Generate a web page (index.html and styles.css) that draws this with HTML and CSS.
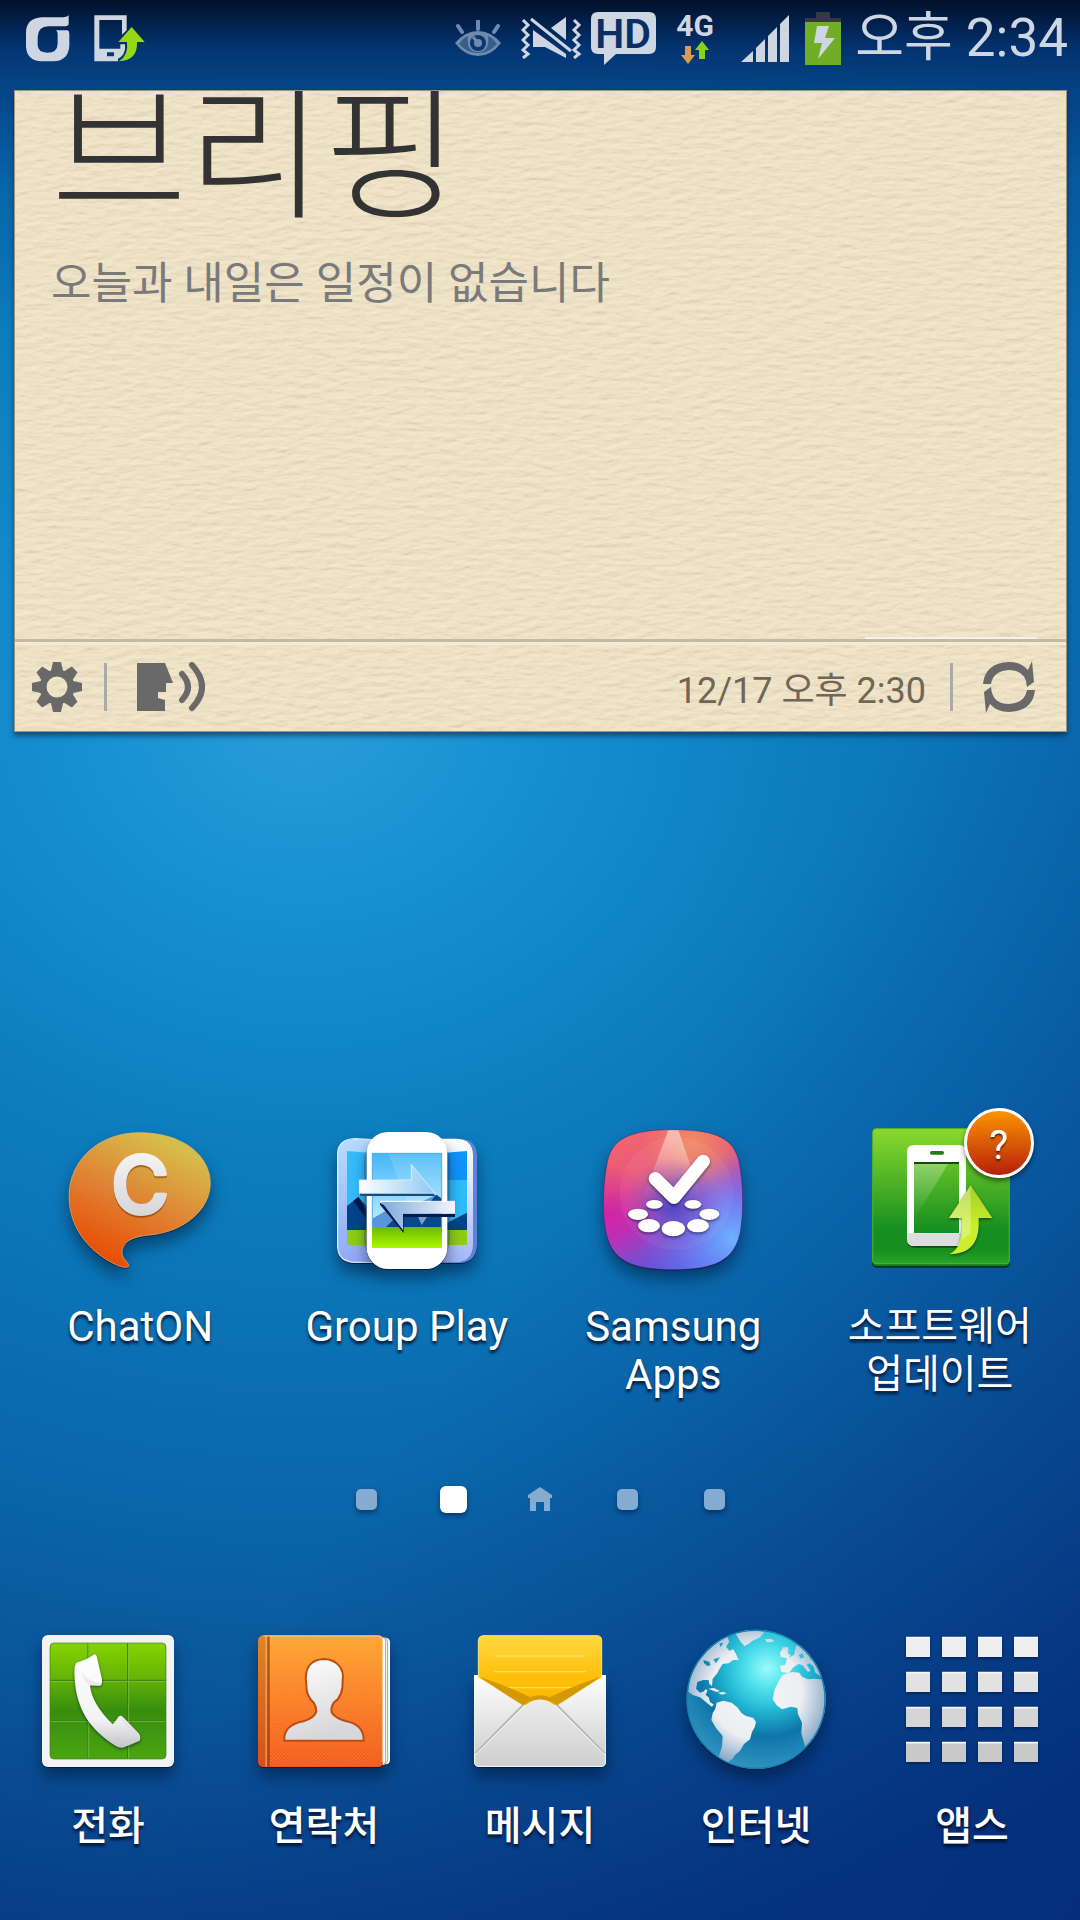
FILE: index.html
```html
<!DOCTYPE html>
<html lang="ko">
<head>
<meta charset="utf-8">
<meta name="viewport" content="width=device-width, initial-scale=1">
<title>홈 화면</title>
<link rel="stylesheet" href="styles.css">
</head>
<body>
<header class="status">
  <div class="status-left">
    <svg class="ic-carrier" viewBox="78 44 132 141" aria-hidden="true"><path fill="#ced6e2" fill-rule="evenodd" d="M78 95Q80 53 125 51H180Q203 51 206 44V72Q204 78 192 78H145Q114 79 113 110V135Q114 157 142 157Q172 157 173 130V103Q173 92 167 90H202Q208 91 208 100V135Q206 182 160 183H125Q80 182 78 138Z"/></svg>
    <svg class="ic-update" viewBox="282 42 153 141" aria-hidden="true"><path fill="#ced6e2" fill-rule="evenodd" d="M283 43H380V88L366 101V57H298V143H361V130H375V145Q370 168 354 173V181H283ZM321 154V166H342V154Z"/><path fill="#96d813" d="M395 78L434 123H411Q414 178 357 181Q386 163 381 123H355Z"/></svg>
  </div>
  <div class="status-right">
    <svg class="ic-eye" viewBox="0 0 46 36" aria-hidden="true"><path d="M3 6l4 6M23 1v8M43 6l-4 6" stroke="#6f8aaf" stroke-width="4" stroke-linecap="round"/><path fill="#6f8aaf" d="M0 23Q10 11 23 11Q36 11 46 23Q36 36 23 36Q10 36 0 23Z"/><path fill="#0a386e" d="M4 24Q8 18 13 16Q11 32 23 32Q35 32 33 16Q38 18 42 24Q34 33 23 33Q12 33 4 24Z" opacity=".55"/><circle cx="23" cy="23" r="8" fill="#0a386e"/><circle cx="23" cy="23" r="4" fill="#6f8aaf"/><path d="M18 17l5 6" stroke="#6f8aaf" stroke-width="3"/></svg>
    <svg class="ic-mute" viewBox="0 0 61 42" aria-hidden="true"><g fill="none" stroke="#ced6e2" stroke-width="3"><path d="M2 3l5 5-5 5 5 5-5 5 5 5-5 5 5 4-5 4M53 3l5 5-5 5 5 5-5 5 5 5-5 5 5 4-5 4"/><path d="M10 2L50 34" stroke-width="3"/></g><path fill="#ced6e2" d="M30 11L45 0V23ZM12 13L45 37V41L24 30H12Z"/></svg>
    <svg class="ic-hd" viewBox="0 0 65 54" aria-hidden="true"><path fill="#ced6e2" d="M7 1H58Q65 1 65 8V36Q65 43 58 43H25L13 54V43H7Q0 43 0 36V8Q0 1 7 1Z"/><text x="32" y="37" text-anchor="middle">HD</text></svg>
    <div class="net"><span>4G</span><svg viewBox="0 0 28 23" aria-hidden="true"><path fill="#d79b51" d="M4 5H10V14H14L7 23L0 14H4Z"/><path fill="#8ad11b" d="M21 0L28 9H24V18H18V9H14Z"/></svg></div>
    <svg class="ic-signal" viewBox="0 0 48 47" aria-hidden="true"><path fill="#ced6e2" d="M0 47L12 36V47ZM15 33L24 24V47H15ZM27 21L36 12V47H27ZM39 9L48 0V47H39Z"/></svg>
    <svg class="ic-battery" viewBox="0 0 36 53" aria-hidden="true"><path fill="#343a40" d="M11 0H25V6H36V11H0V6H11Z"/><path fill="#72ad27" d="M0 10H36V53H0Z"/><path fill="#ced6e2" d="M12 14H24L20 26H30L13 47L17 31H9Z"/></svg>
    <time class="clock">오후 2:34</time>
  </div>
</header>

<section class="briefing">
  <svg class="paper" aria-hidden="true"><filter id="grain" x="0" y="0" width="100%" height="100%"><feTurbulence type="fractalNoise" baseFrequency="0.06 0.18" numOctaves="4" seed="7"/><feDiffuseLighting surfaceScale="0.8" diffuseConstant="1.05" lighting-color="#f0e4c8"><feDistantLight azimuth="250" elevation="68"/></feDiffuseLighting></filter><rect width="100%" height="100%" filter="url(#grain)"/></svg>
  <div class="briefing-body">
    <h1>브리핑</h1>
    <p>오늘과 내일은 일정이 없습니다</p>
  </div>
  <div class="briefing-bar">
    <button class="bar-btn" aria-label="설정"><svg viewBox="-26 -26 52 52" width="52" height="52"><g fill="#696969"><path id="tooth" d="M-4-25H4L7-12H-7Z"/><use href="#tooth" transform="rotate(45)"/><use href="#tooth" transform="rotate(90)"/><use href="#tooth" transform="rotate(135)"/><use href="#tooth" transform="rotate(180)"/><use href="#tooth" transform="rotate(225)"/><use href="#tooth" transform="rotate(270)"/><use href="#tooth" transform="rotate(315)"/></g><circle r="14" fill="none" stroke="#696969" stroke-width="7"/></svg></button>
    <span class="rule"></span>
    <button class="bar-btn speak" aria-label="음성으로 듣기"><svg viewBox="0 0 68 50" width="68" height="50"><path fill="#696969" d="M0 1H28L36 21H29V30H21V36L28 38V49H0Z"/><path fill="none" stroke="#696969" stroke-width="6" stroke-linecap="round" d="M45 12Q57 25 45 38M55 3Q75 25 55 46"/></svg></button>
    <time>12/17 오후 2:30</time>
    <span class="rule"></span>
    <button class="bar-btn" aria-label="새로 고침"><svg viewBox="0 0 52 52" width="52" height="52"><g id="arc"><path fill="#696969" d="M0 23Q2 2 26 1Q38 1 45 9L49 0L51 21L44 26Q43 9 26 9Q10 10 8 23Z"/></g><use href="#arc" transform="rotate(180 26 26)"/></svg></button>
  </div>
</section>

<main class="apps">
  <a class="app" href="#">
    <svg class="icon" viewBox="63 60 480 480" aria-hidden="true"><defs><linearGradient id="chat" x1=".75" y1=".1" x2=".3" y2="1"><stop offset="0" stop-color="#d6bd4a"/><stop offset=".5" stop-color="#e08033"/><stop offset="1" stop-color="#e84a00"/></linearGradient><linearGradient id="silver" x1="0" y1="0" x2="0" y2="1"><stop offset="0" stop-color="#fbfbfb"/><stop offset="1" stop-color="#cfcfd2"/></linearGradient></defs>
    <path class="soft" fill="url(#chat)" stroke="#edc07a" stroke-width="2" d="M302 98C430 98 514 166 514 250C514 330 435 395 335 405C270 410 250 430 249 460C250 480 273 488 268 500Q260 505 240 498C160 465 90 390 90 290C90 180 180 98 302 98Z"/><text class="chat-c" x="303" y="338" text-anchor="middle" fill="url(#silver)" stroke="url(#silver)">C</text></svg>
    <span class="label">ChatON</span>
  </a>
  <a class="app" href="#">
    <svg class="icon" viewBox="861 60 480 480" aria-hidden="true"><defs><linearGradient id="sky" x1="0" y1="0" x2="0" y2="1"><stop offset="0" stop-color="#42b6f8"/><stop offset="1" stop-color="#c8f0ff"/></linearGradient><linearGradient id="side" x1="0" y1="0" x2="0" y2="1"><stop offset="0" stop-color="#b6dcff"/><stop offset="1" stop-color="#93a8f8"/></linearGradient><linearGradient id="side2" x1="0" y1="0" x2="0" y2="1"><stop offset="0" stop-color="#ffffff"/><stop offset="1" stop-color="#a3b7fa"/></linearGradient><linearGradient id="grass" x1="0" y1="0" x2="0" y2="1"><stop offset="0" stop-color="#69bc00"/><stop offset="1" stop-color="#aef800"/></linearGradient><linearGradient id="arr"><stop offset="0" stop-color="#fff"/><stop offset="1" stop-color="#8fc9f2"/></linearGradient><linearGradient id="arr2"><stop offset="0" stop-color="#7fa9d8"/><stop offset="1" stop-color="#f2f5ff"/></linearGradient></defs>
    <g class="soft"><path fill="url(#side)" stroke="#dcebff" stroke-width="4" d="M893 160Q895 118 945 116L1010 120V487H945Q895 485 893 440Z"/><path fill="#5c83dc" d="M1200 116H1260Q1310 118 1311 165V435Q1309 485 1262 489H1200Z"/><path fill="url(#side2)" d="M1200 116H1250Q1298 118 1299 165V435Q1297 484 1250 487H1200Z"/></g>
    <path fill="#35bdfb" d="M921 153L985 158V392H921Z"/><path fill="#1094fb" d="M1215 158L1281 153V392H1215Z"/><path fill="#2fbcfc" d="M1215 240H1281V392H1215Z"/><path fill="#00468a" d="M921 318L955 291L990 330V395H921ZM1215 372L1281 338V395H1215Z"/><path fill="#02164b" d="M940 303L955 291L990 350V370Z"/><path fill="#8fce14" d="M921 390H990V435H921ZM1215 390H1281V435H1215Z"/>
    <rect x="972" y="130" width="258" height="345" rx="50" fill="#24406f" opacity=".3"/>
    <rect class="soft" x="980" y="96" width="242" height="411" rx="64" fill="#fff"/>
    <path fill="url(#sky)" d="M996 159H1206V384H996Z"/><path fill="#fff" opacity=".15" d="M1045 159H1206V384H1130Z"/>
    <path fill="#5995d8" d="M996 356L1025 340L1080 305L1110 320L1190 284L1206 296V384H996Z"/><path fill="#074889" d="M1035 384L1075 345L1110 318L1140 345L1188 284L1206 296V384Z"/><path fill="#7aa0cb" d="M1062 350L1080 306L1160 306L1175 330L1145 375L1132 346Z"/>
    <path fill="url(#grass)" d="M996 381H1206V444H996Z"/><path fill="none" stroke="#55aee8" stroke-width="3" d="M997 381V160H1205V381"/>
    <path fill="#154b85" d="M960 278H1180L1185 288H960Z"/><path fill="url(#arr)" stroke="#e8faff" stroke-width="2" d="M958 240H1114V193L1184 280H958Z"/>
    <path fill="#031b50" d="M1089 341H1245V351H1091V399L1020 314V309Z"/><path fill="url(#arr2)" d="M1024 305H1245V341H1089V391Z"/><path stroke="#fff" stroke-width="3" d="M1020 304H1245"/></svg>
    <span class="label">Group Play</span>
  </a>
  <a class="app" href="#">
    <svg class="icon" viewBox="102 90 480 480" aria-hidden="true"><defs><linearGradient id="sam" x1=".25" y1="0" x2=".55" y2="1"><stop offset="0" stop-color="#f4646e"/><stop offset=".35" stop-color="#e6587c"/><stop offset=".62" stop-color="#b73bba"/><stop offset="1" stop-color="#5457dc"/></linearGradient><radialGradient id="samblue" cx=".93" cy=".78" r=".65"><stop offset="0" stop-color="#6cb2ff"/><stop offset=".4" stop-color="#6a88f8" stop-opacity=".85"/><stop offset="1" stop-color="#7070f0" stop-opacity="0"/></radialGradient><radialGradient id="sampur" cx=".5" cy=".55" r=".35"><stop offset="0" stop-color="#403cc0" stop-opacity=".95"/><stop offset="1" stop-color="#7a50c8" stop-opacity="0"/></radialGradient><radialGradient id="sammag" cx=".05" cy=".6" r=".35"><stop offset="0" stop-color="#d01ba8" stop-opacity=".8"/><stop offset="1" stop-color="#d01ba8" stop-opacity="0"/></radialGradient><radialGradient id="samor" cx=".64" cy=".1" r=".36"><stop offset="0" stop-color="#f09060" stop-opacity=".9"/><stop offset="1" stop-color="#f09060" stop-opacity="0"/></radialGradient><linearGradient id="beam" x1="0" y1="0" x2="0" y2="1"><stop offset="0" stop-color="#fff" stop-opacity=".5"/><stop offset="1" stop-color="#fff" stop-opacity="0"/></linearGradient><path id="samshape" d="M342 119C480 119 525 150 540 215C555 290 553 380 543 430C525 510 470 539 342 539C214 539 159 510 142 430C130 380 130 290 145 215C160 150 204 119 342 119Z"/></defs>
    <use class="soft" href="#samshape" fill="url(#sam)"/><use href="#samshape" fill="url(#samblue)"/><use href="#samshape" fill="url(#sammag)"/><use href="#samshape" fill="url(#samor)"/><path fill="url(#beam)" d="M328 120H358L430 330H250Z"/><use href="#samshape" fill="url(#sampur)"/><circle cx="352" cy="310" r="170" fill="#fff" opacity=".05"/>
    <use href="#samshape" fill="none" stroke="#3d1f84" stroke-opacity=".5" stroke-width="3"/>
    <g class="crisp" fill="#fff"><path fill="none" stroke="#fff" stroke-width="40" stroke-linecap="round" stroke-linejoin="round" d="M289 266L345 322L433 214"/><ellipse cx="286" cy="343" rx="25" ry="13"/><ellipse cx="402" cy="343" rx="25" ry="13"/><ellipse cx="237" cy="373" rx="30" ry="17"/><ellipse cx="451" cy="373" rx="30" ry="17"/><ellipse cx="270" cy="407" rx="33" ry="20"/><ellipse cx="417" cy="407" rx="33" ry="20"/><ellipse cx="343" cy="416" rx="35" ry="23"/></g></svg>
    <span class="label">Samsung<br>Apps</span>
  </a>
  <a class="app" href="#">
    <span class="icon-wrap">
    <svg class="icon" viewBox="900 90 480 480" aria-hidden="true"><defs><linearGradient id="up" x1="0" y1="0" x2="0" y2="1"><stop offset="0" stop-color="#8bd92c"/><stop offset=".75" stop-color="#168f20"/><stop offset=".9" stop-color="#168f20"/><stop offset="1" stop-color="#2aa52a"/></linearGradient><linearGradient id="lime" x1="0" y1="0" x2="0" y2="1"><stop offset="0" stop-color="#a3cf20"/><stop offset=".6" stop-color="#c9ee2c"/><stop offset="1" stop-color="#cdee2e"/></linearGradient><linearGradient id="glare" x1="0" y1="0" x2="0" y2="1"><stop offset="0" stop-color="#fff" stop-opacity=".3"/><stop offset="1" stop-color="#fff" stop-opacity="0"/></linearGradient></defs>
    <rect x="936" y="118" width="414" height="415" rx="14" fill="#04301f"/><rect x="936" y="114" width="414" height="414" rx="14" fill="#117d1b"/><rect x="938" y="116" width="410" height="405" rx="12" fill="url(#up)" stroke="#5cc043" stroke-opacity=".6" stroke-width="4"/>
    <path fill="#064f15" d="M1041 440H1218V451Q1218 473 1196 473H1063Q1041 473 1041 451Z"/><path fill="#fff" fill-rule="evenodd" d="M1063 165H1196Q1218 165 1218 187V446Q1218 468 1196 468H1063Q1041 468 1041 446V187Q1041 165 1063 165ZM1062 216V429H1197V216Z"/><rect x="1110" y="183" width="42" height="11" rx="5" fill="#237c14"/><path fill="#0e4c14" d="M1062 216H1197V222H1062Z"/><path fill="url(#glare)" d="M1062 222H1164L1062 390Z"/><path fill="#ddd" d="M1041 430H1205Q1200 460 1190 468H1063Q1041 468 1041 446Z"/>
    <path class="crisp" fill="url(#lime)" d="M1232 286L1297 384H1256V405C1254 470 1220 492 1168 492C1197 480 1206 450 1206 384H1167Z"/><path fill="#fff" opacity=".3" d="M1232 286V430L1206 450V384H1167Z"/></svg>
    <span class="badge">?</span>
    </span>
    <span class="label hangul">소프트웨어<br>업데이트</span>
  </a>
</main>

<nav class="pages" aria-label="홈 화면 페이지">
  <a class="page" href="#" aria-label="1"></a>
  <a class="page current" href="#" aria-label="2" aria-current="page"></a>
  <a class="page-home" href="#" aria-label="홈"><svg viewBox="0 0 24 24" width="24" height="24"><path fill="#85abd0" d="M12 0L24 8V11H22V24H16V15H8V24H2V11H0V8Z"/></svg></a>
  <a class="page" href="#" aria-label="4"></a>
  <a class="page" href="#" aria-label="5"></a>
</nav>

<footer class="dock">
  <a class="app" href="#">
    <svg class="icon" viewBox="24 30 480 480" aria-hidden="true"><defs><linearGradient id="green" x1="0" y1="0" x2="0" y2="1"><stop offset="0" stop-color="#86d300"/><stop offset=".3" stop-color="#66b407"/><stop offset=".58" stop-color="#378e0e"/><stop offset="1" stop-color="#4aa412"/></linearGradient><linearGradient id="hand" x1="0" y1="0" x2="0" y2="1"><stop offset="0" stop-color="#fff"/><stop offset=".7" stop-color="#f2f2f4"/><stop offset="1" stop-color="#c4c4c8"/></linearGradient></defs>
    <rect class="soft" x="66" y="75" width="396" height="396" rx="18" fill="#f3f3f5"/><rect x="90" y="99" width="348" height="348" rx="12" fill="url(#green)" stroke="#3c8408" stroke-width="2"/>
    <path stroke="#2f7c0c" stroke-width="3" d="M204 100V446M323 100V446M91 211H437M91 332H437"/><path stroke="#8ac95b" stroke-width="2" d="M206 100V446M326 100V446M91 214H437M91 334H437"/>
    <path class="crisp" fill="url(#hand)" d="M224 132Q229 133 231 142L246 208Q247 226 238 227L210 225Q214 280 278 343Q285 336 295 321Q301 314 309 321L356 370Q364 379 359 392Q333 404 308 413Q298 415 286 407C215 362 166 304 163 190Q163 160 172 157Q201 149 224 132Z"/><path fill="#dcdce0" opacity=".5" d="M186 182Q190 210 246 220Q247 228 236 228H210Q188 212 186 182ZM304 322L357 371L360 386Q330 365 304 330Z"/></svg>
    <span class="label hangul">전화</span>
  </a>
  <a class="app" href="#">
    <svg class="icon" viewBox="672 30 480 480" aria-hidden="true"><defs><linearGradient id="book" x1="0" y1="0" x2="0" y2="1"><stop offset="0" stop-color="#ffa432"/><stop offset=".5" stop-color="#f97a25"/><stop offset="1" stop-color="#f4531c"/></linearGradient><linearGradient id="person" x1="0" y1="0" x2=".3" y2="1"><stop offset="0" stop-color="#fff"/><stop offset="1" stop-color="#d7d7d9"/></linearGradient><pattern id="dots" width="10" height="10" patternUnits="userSpaceOnUse"><path fill="#ffcf60" d="M0 0h5v5h-5zM5 5h5v5h-5z"/></pattern></defs>
    <g class="soft"><path fill="#fff" d="M1060 80L1098 83Q1110 85 1110 97V449Q1110 461 1098 463L1060 468Z"/><path fill="url(#book)" d="M732 76H1076Q1089 77 1089 90V456Q1088 470 1076 471H732Q714 471 714 453V94Q714 77 732 76Z"/></g><path stroke="#72757a" stroke-width="2" fill="none" d="M1094 82Q1102 84 1103 97V449Q1102 460 1094 463M1090 78Q1096 82 1097 94V452Q1096 465 1088 468"/>
    <path fill="url(#dots)" opacity=".2" d="M750 78H1082V469H750Z"/><path fill="#a04c10" opacity=".35" d="M714 92Q715 77 732 76H742V471H732Q714 471 714 453Z"/><path fill="#8d3a05" opacity=".7" d="M742 78H749V470H742Z"/><path fill="#ffc48a" opacity=".5" d="M736 78H741V470H736Z"/><path fill="none" stroke="#ffe2a5" stroke-width="3" opacity=".8" d="M730 78H1076Q1087 79 1087 90V456"/>
    <path fill="url(#person)" stroke="#bd4c12" stroke-width="6" d="M912 147C955 149 973 180 968 210Q970 260 942 277Q932 290 935 308Q948 326 980 334Q1033 346 1031 392H793Q790 345 850 334Q883 324 889 305Q889 290 881 278Q858 258 859 225Q848 150 912 147Z"/></svg>
    <span class="label hangul">연락처</span>
  </a>
  <a class="app" href="#">
    <svg class="icon" viewBox="60 30 480 480" aria-hidden="true"><defs><linearGradient id="note" x1="0" y1="0" x2="0" y2="1"><stop offset="0" stop-color="#ffd941"/><stop offset=".6" stop-color="#fdbf0a"/><stop offset="1" stop-color="#fcb900"/></linearGradient><linearGradient id="env" x1="0" y1="0" x2="0" y2="1"><stop offset="0" stop-color="#fff"/><stop offset="1" stop-color="#d2d2d3"/></linearGradient><linearGradient id="flap" x1="0" y1="0" x2="0" y2="1"><stop offset="0" stop-color="#ececec"/><stop offset="1" stop-color="#cfcfd0"/></linearGradient></defs>
    <path class="soft" fill="#f3f3f4" d="M102 195H498V456Q497 470 484 471H116Q103 470 102 456Z"/><path fill="url(#note)" stroke="#ffe373" stroke-width="3" d="M128 77H472Q485 78 485 91V202L345 286H253L115 202V91Q116 78 128 77Z"/><path stroke="#ffda60" stroke-width="4" d="M163 138H437M163 185H437M185 233H415"/><path fill="#cf9201" opacity=".85" d="M118 200Q220 235 270 262Q300 250 330 262Q380 235 482 200L352 288L335 275Q300 262 265 275L248 288Z"/>
    <path fill="url(#env)" d="M102 195L248 286L104 432ZM498 195L352 286L496 432Z"/><path stroke="#b7b7b7" stroke-width="6" d="M248 286L106 430M352 286L494 430"/><path fill="url(#flap)" stroke="#f3f3f3" stroke-width="3" d="M104 436L244 298Q274 270 300 270Q326 270 356 298L496 436V456Q495 469 484 469H116Q105 469 104 456Z"/></svg>
    <span class="label hangul">메시지</span>
  </a>
  <a class="app" href="#">
    <svg class="icon" viewBox="708 30 480 480" aria-hidden="true"><defs><radialGradient id="sea" cx=".58" cy=".28" r=".75"><stop offset="0" stop-color="#9bfbff"/><stop offset=".2" stop-color="#4fe0ec"/><stop offset=".42" stop-color="#1fb3d0"/><stop offset=".65" stop-color="#0f74a9"/><stop offset="1" stop-color="#3397c4"/></radialGradient><radialGradient id="land" cx=".5" cy=".45" r=".55"><stop offset="0" stop-color="#f6f6f8"/><stop offset=".6" stop-color="#eceef2"/><stop offset="1" stop-color="#7fa2c4"/></radialGradient><clipPath id="world"><circle cx="948" cy="268" r="209"/></clipPath><mask id="lands" maskUnits="userSpaceOnUse" x="708" y="30" width="480" height="480"><g fill="#fff"><path d="M745 245L747 200L775 150L815 105L840 88L862 80L868 95L858 110L868 122L880 118L888 132L896 150L880 150L866 160L848 162L838 178L832 190L818 206L816 228L808 222L806 210L790 210L772 216L768 236L780 248L792 244L796 238L803 240L797 255L806 262L810 276L822 284L815 290L800 278L780 262L760 256Z"/><path d="M886 70L915 60H960L972 68L960 82L938 92L928 100L914 108L902 96Z"/><path d="M976 88L992 86L1003 92L992 97L978 95Z"/><path d="M805 236L822 234L840 243L830 246ZM834 248L850 246L860 250L846 254Z"/><path d="M830 278L850 272L875 278L892 292L905 310L918 318L940 324L948 336L944 352L936 366L930 388L912 402L900 422L884 436L878 446L862 458L836 440L846 410L848 378L828 354L814 330L818 310L826 296Z"/><path d="M1020 128L1030 112L1045 112L1044 130L1052 136L1044 146L1022 140ZM1068 108L1085 98L1135 130L1160 190L1150 205L1137 196L1126 188L1120 168L1108 160L1100 164L1112 182L1104 186L1088 166L1076 162L1060 172L1046 190L1024 186L1020 168L1036 164L1040 148L1062 134Z"/><path d="M1028 194L1056 186L1078 188L1086 200L1104 208L1124 206L1144 208L1164 240L1160 300L1130 380L1096 412L1084 370L1086 338L1074 312L1072 294L1052 290L1026 298L1010 286L998 268L1004 238L1016 214Z"/></g><g fill="#000"><path d="M790 150L808 155L812 166L802 168L792 160ZM820 148L840 142L828 160ZM838 100L850 98L842 112ZM1076 135L1088 130L1092 142L1082 146ZM1110 128L1118 132L1112 150Z"/></g></mask></defs>
    <circle class="soft" cx="948" cy="268" r="209" fill="url(#sea)"/><g clip-path="url(#world)"><rect x="738" y="58" width="420" height="420" fill="url(#land)" mask="url(#lands)"/></g><circle cx="948" cy="268" r="207" fill="none" stroke="#0f7fae" stroke-width="4"/></svg>
    <span class="label hangul">인터넷</span>
  </a>
  <a class="app" href="#">
    <svg class="icon" viewBox="96 30 480 480" aria-hidden="true"><g class="crisp"><path fill="#eee" d="M138 81h72v60h-72zM246 81h72v60h-72zM354 81h72v60h-72zM462 81h72v60h-72z"/><path fill="#e2e2e3" d="M138 186h72v60h-72zM246 186h72v60h-72zM354 186h72v60h-72zM462 186h72v60h-72z"/><path fill="#d5d5d6" d="M138 291h72v60h-72zM246 291h72v60h-72zM354 291h72v60h-72zM462 291h72v60h-72z"/><path fill="#c9c9ca" d="M138 396h72v60h-72zM246 396h72v60h-72zM354 396h72v60h-72zM462 396h72v60h-72z"/></g><path stroke="#f6f6f8" stroke-width="5" stroke-dasharray="72 36" d="M138 83H534M138 188H534M138 293H534M138 398H534"/></svg>
    <span class="label hangul">앱스</span>
  </a>
</footer>
</body>
</html>
```
FILE: styles.css
```css
* { box-sizing: border-box; }

body {
  margin: 0;
  min-height: 100vh;
  display: flex;
  flex-direction: column;
  font-family: Roboto, "Noto Sans CJK KR", sans-serif;
  background:
    linear-gradient(180deg, #01102a 0, rgba(2, 40, 100, .82) 48px, rgba(3, 60, 125, .8) 90px, rgba(5, 80, 150, .45) 180px, rgba(5, 90, 160, 0) 330px),
    linear-gradient(125deg, rgba(3, 40, 110, 0) 58%, rgba(3, 35, 115, .5) 100%),
    radial-gradient(135% 66% at 28% 37%, #2a9dd8 0, #1791d1 15%, #0c7dbd 36%, #0a69ad 60%, #0a569b 78%, #063a84 100%);
}

a { color: inherit; text-decoration: none; }
button { border: 0; padding: 0; background: none; cursor: pointer; }
svg { display: block; flex: none; }

/* Status bar */
.status {
  height: 76px;
  padding: 0 12px 0 26px;
  display: flex;
  justify-content: space-between;
  align-items: center;
  color: #ced6e2;
}
.status-left, .status-right { display: flex; align-items: center; }
.status-left { gap: 24px; }
.ic-carrier { width: 44px; height: 47px; }
.ic-update { width: 51px; height: 47px; }
.ic-eye { width: 46px; height: 36px; margin-right: 20px; }
.ic-mute { width: 61px; height: 42px; margin-right: 9px; }
.ic-hd { width: 65px; height: 54px; margin-right: 20px; overflow: visible; }
.ic-hd text { font-size: 41px; font-weight: 600; fill: #0a2f63; }
.net { display: flex; flex-direction: column; align-items: center; gap: 2px; width: 38px; margin-right: 27px; }
.net span { font-size: 30px; line-height: 26px; font-weight: 700; }
.net svg { width: 28px; height: 23px; }
.ic-signal { width: 48px; height: 47px; margin-right: 16px; }
.ic-battery { width: 36px; height: 53px; margin-right: 14px; }
.clock { font-size: 53px; line-height: 64px; white-space: nowrap; }

/* Briefing widget */
.briefing {
  position: relative;
  margin: 14px 13px 0 14px;
  border: 1px solid #a0937a;
  background: #ece0c2;
  box-shadow: 0 4px 5px rgba(0, 30, 70, .55);
}
.paper { position: absolute; inset: 0; width: 100%; height: 100%; }
.briefing-body {
  position: relative;
  height: 548px;
  padding: 0 36px;
  overflow: hidden;
}
.briefing-body::after {
  content: "";
  position: absolute;
  right: 29px;
  bottom: 0;
  width: 172px;
  height: 2px;
  background: #f4f2ee;
}
h1 {
  margin: -59px 0 0;
  font-family: "Noto Sans CJK KR", sans-serif;
  font-size: 148px;
  line-height: 220px;
  font-weight: 300;
  color: #333;
}
.briefing-body p {
  margin: 2px 0 0;
  font-size: 44px;
  line-height: 60px;
  color: #7a7a7a;
}
.briefing-bar {
  position: relative;
  height: 92px;
  padding: 0 31px 0 16px;
  display: flex;
  align-items: center;
  border-top: 3px solid #c5baa1;
  box-shadow: inset 0 3px #f3ebd5;
}
.rule { width: 3px; height: 48px; background: #aaa9ab; margin: 0 30px 0 21px; }
.briefing-bar time { margin-left: auto; padding-top: 8px; font-size: 36px; line-height: 48px; color: #6f6655; }
.briefing-bar time + .rule { margin-left: 24px; }

/* Application shortcuts */
.apps {
  margin-top: 388px;
  padding: 0 7px;
  display: grid;
  grid-template-columns: repeat(4, 1fr);
}
.app { display: flex; flex-direction: column; align-items: center; gap: 23px; }
.icon { width: 160px; height: 160px; overflow: visible; }
.icon-wrap { position: relative; }
.soft { filter: drop-shadow(0 3px 2px rgba(0, 15, 45, .6)) drop-shadow(0 28px 24px rgba(0, 15, 45, .5)); }
.crisp { filter: drop-shadow(0 4px 4px rgba(0, 15, 40, .6)); }
.chat-c { font-family: Inter, sans-serif; font-size: 236px; font-weight: 500; stroke-width: 12px; stroke-linejoin: round; filter: drop-shadow(0 5px 2px rgba(110, 50, 0, .6)); }
.badge {
  position: absolute;
  top: -12px;
  right: -14px;
  width: 70px;
  height: 70px;
  border: 3px solid #fff;
  border-radius: 50%;
  background: linear-gradient(#fb9500, #b71f0c);
  box-shadow: 0 3px 5px rgba(0, 0, 0, .5);
  color: #fff;
  font-size: 40px;
  line-height: 70px;
  text-align: center;
  text-shadow: 0 2px 2px rgba(0, 0, 0, .6);
}
.label {
  color: #fff;
  font-size: 42px;
  line-height: 48px;
  text-align: center;
  text-shadow: 0 3px 3px rgba(0, 10, 35, .85);
}
.hangul { font-size: 40px; }
.dock .hangul { font-weight: 500; }

/* Page indicator */
.pages {
  margin-top: 82px;
  height: 36px;
  display: flex;
  justify-content: center;
  align-items: center;
  gap: 60px;
}
.page {
  width: 21px;
  height: 21px;
  margin: 0 3px;
  border-radius: 5px;
  background: #85abd0;
  box-shadow: 0 3px 5px rgba(0, 20, 60, .5);
}
.page.current { width: 27px; height: 27px; margin: 0; border-radius: 6px; background: #fff; }
.page-home { width: 27px; display: flex; justify-content: center; }

/* Dock */
.dock {
  margin-top: 103px;
  padding-bottom: 46px;
  display: grid;
  grid-template-columns: repeat(5, 1fr);
}
```
